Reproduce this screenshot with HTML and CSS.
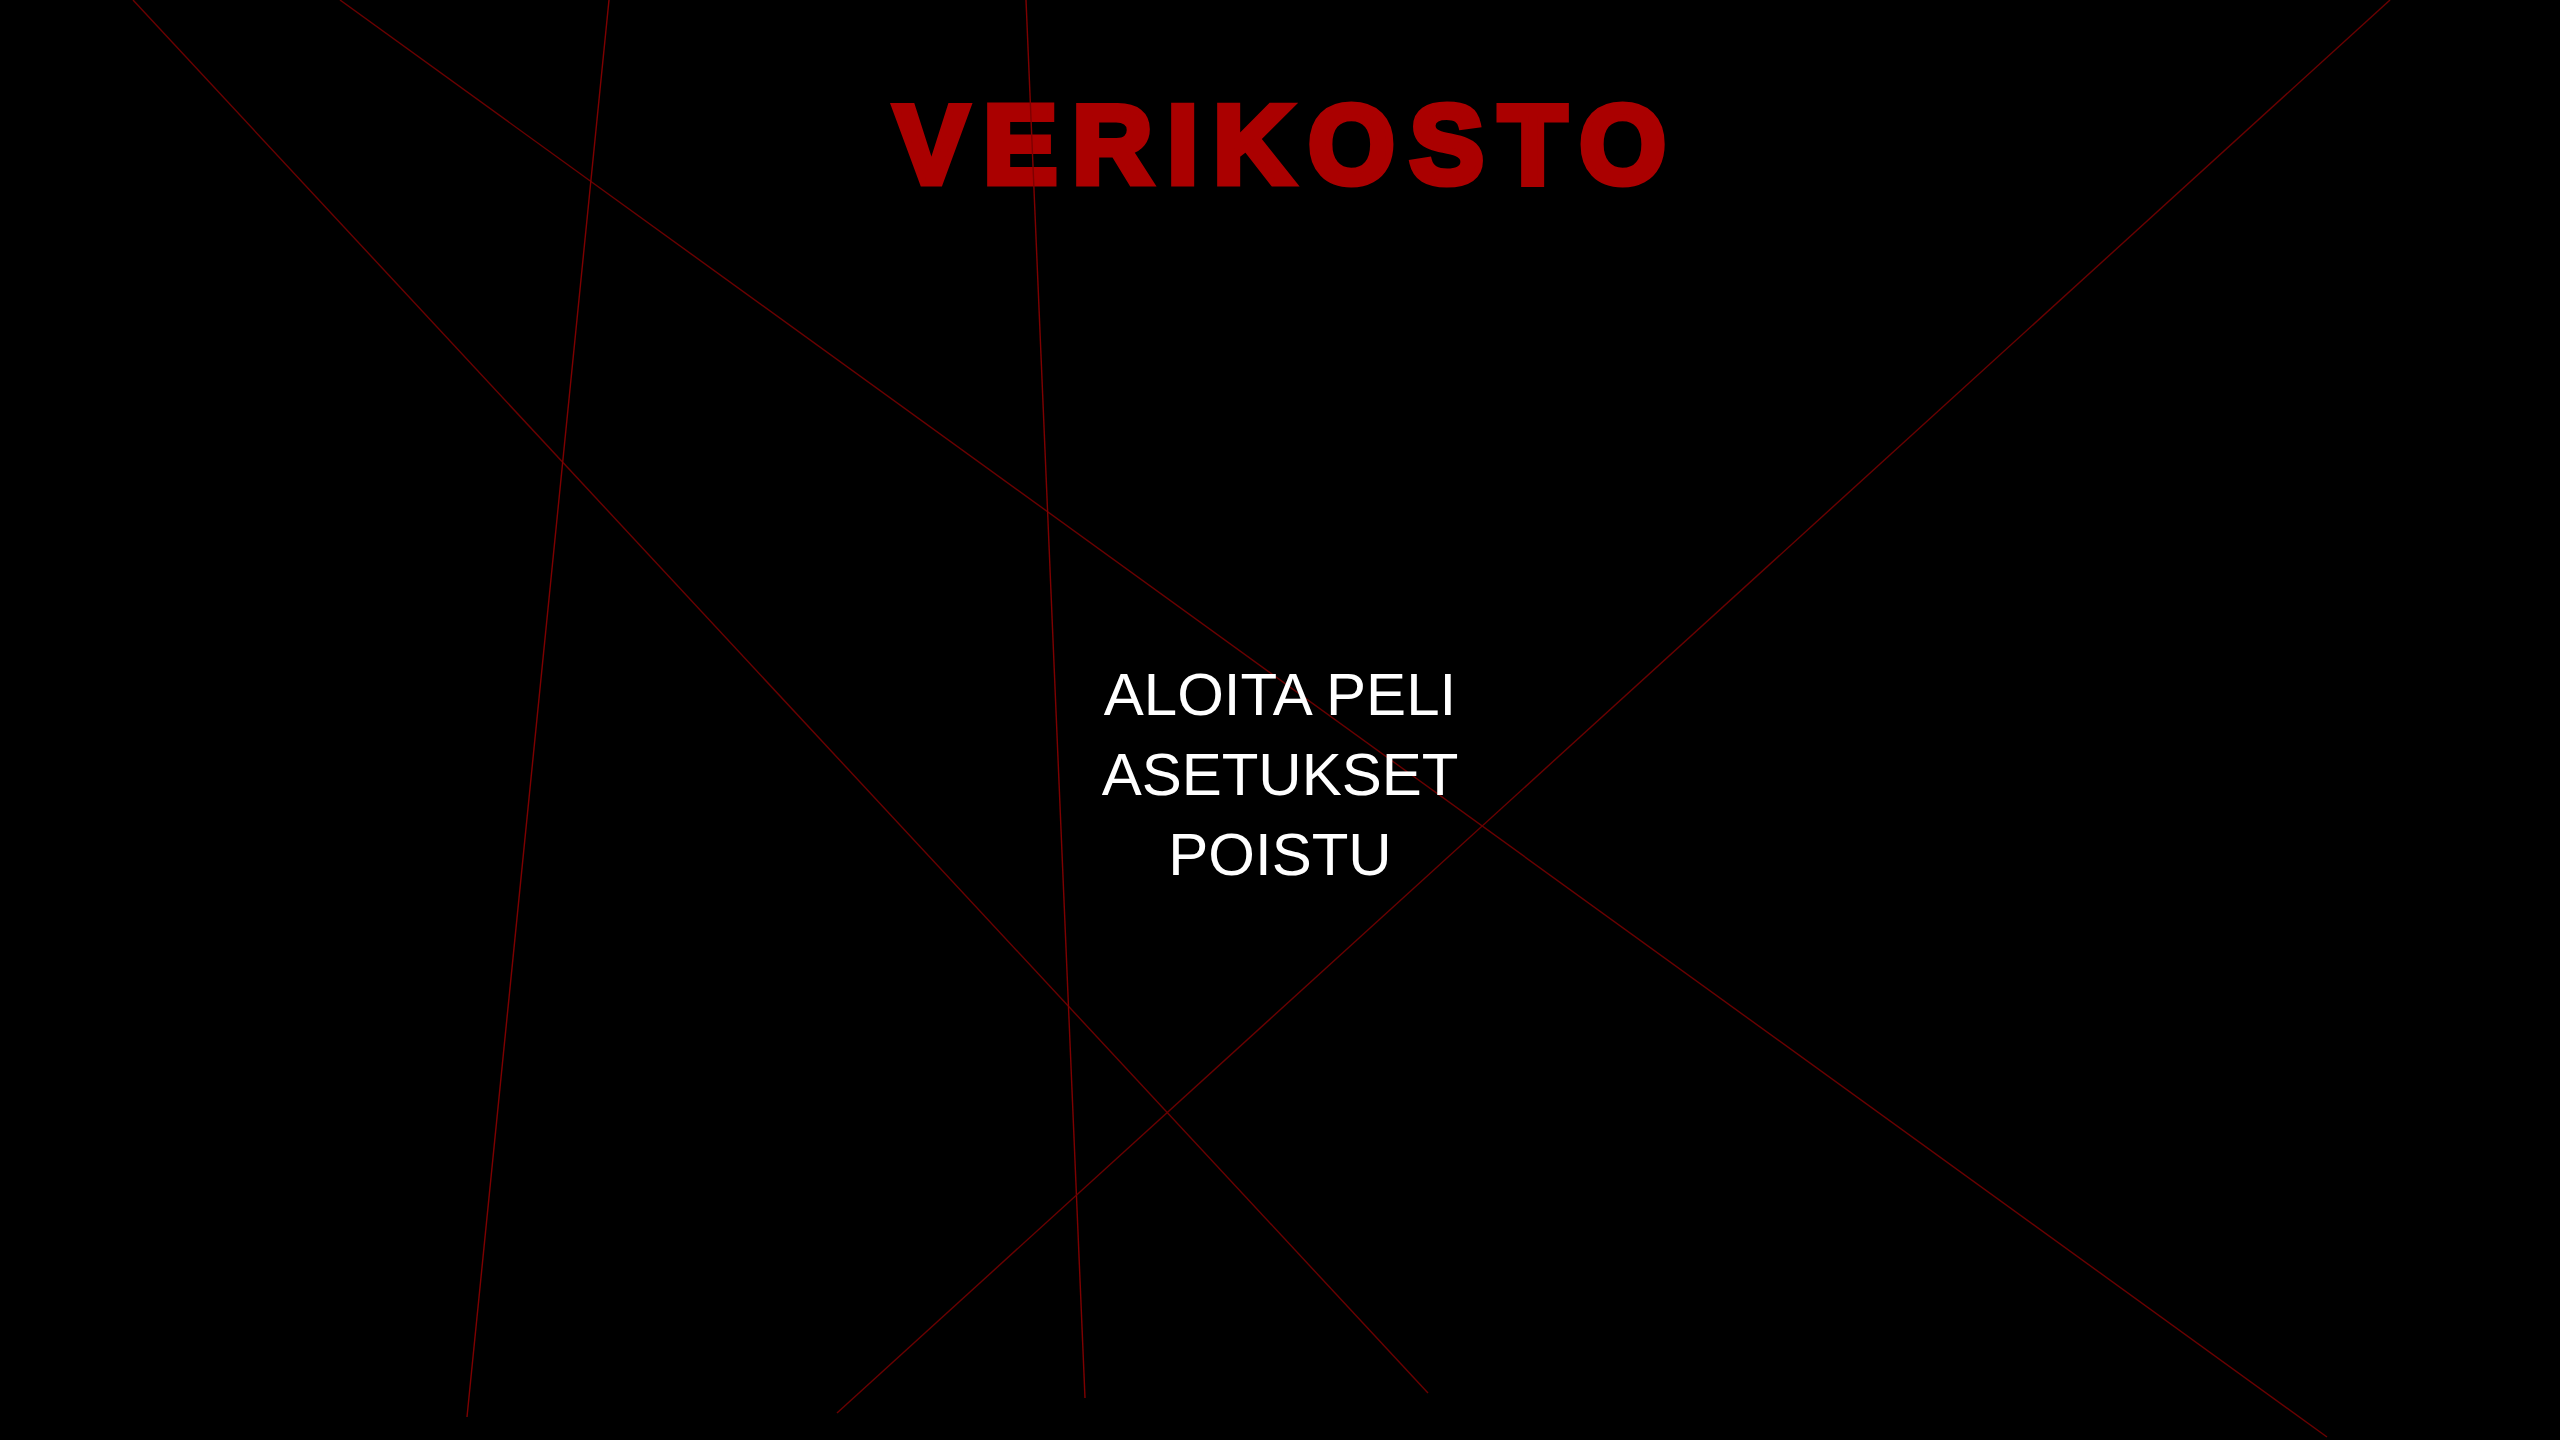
FILE: index.html
```html
<!DOCTYPE html>
<html lang="fi">
<head>
<meta charset="utf-8">
<title>Verikosto</title>
<link rel="stylesheet" href="styles.css">
</head>
<body>
<main class="screen">
  <h1 class="title">VERIKOSTO</h1>
  <nav class="menu">
    <div class="menu-item">ALOITA PELI</div>
    <div class="menu-item">ASETUKSET</div>
    <div class="menu-item">POISTU</div>
  </nav>
</main>
<svg class="veins" width="2560" height="1440" viewBox="0 0 2560 1440" xmlns="http://www.w3.org/2000/svg">
  <line x1="133" y1="0" x2="1428" y2="1393" class="vein"/>
  <line x1="340" y1="0" x2="2327" y2="1437" class="vein"/>
  <line x1="609" y1="0" x2="467" y2="1417" class="vein bright"/>
  <line x1="1026" y1="0" x2="1085" y2="1398" class="vein bright"/>
  <line x1="2390" y1="0" x2="837" y2="1413" class="vein"/>
</svg>
</body>
</html>
```
FILE: styles.css
```css
html, body {
  margin: 0;
  padding: 0;
  background: #000;
  width: 2560px;
  height: 1440px;
  overflow: hidden;
}
.veins {
  position: absolute;
  left: 0;
  top: 0;
  z-index: 2;
  pointer-events: none;
}
.vein {
  stroke: #6a0000;
  stroke-width: 1.4;
}
.vein.bright {
  stroke: #7e0000;
}
.screen {
  display: flex;
  flex-direction: column;
  align-items: center;
  font-family: "Liberation Sans", Arial, sans-serif;
}
.title {
  position: relative;
  z-index: 1;
  margin: 90px 0 0;
  font-size: 111px;
  line-height: 111px;
  font-weight: 700;
  letter-spacing: 15px;
  padding-left: 15px;
  color: #aa0000;
  -webkit-text-stroke: 7px #aa0000;
  white-space: nowrap;
}
.menu {
  position: relative;
  z-index: 3;
  margin-top: 454px;
  display: flex;
  flex-direction: column;
  align-items: center;
}
.menu-item {
  color: #fff;
  font-size: 60px;
  line-height: 80px;
}
```
